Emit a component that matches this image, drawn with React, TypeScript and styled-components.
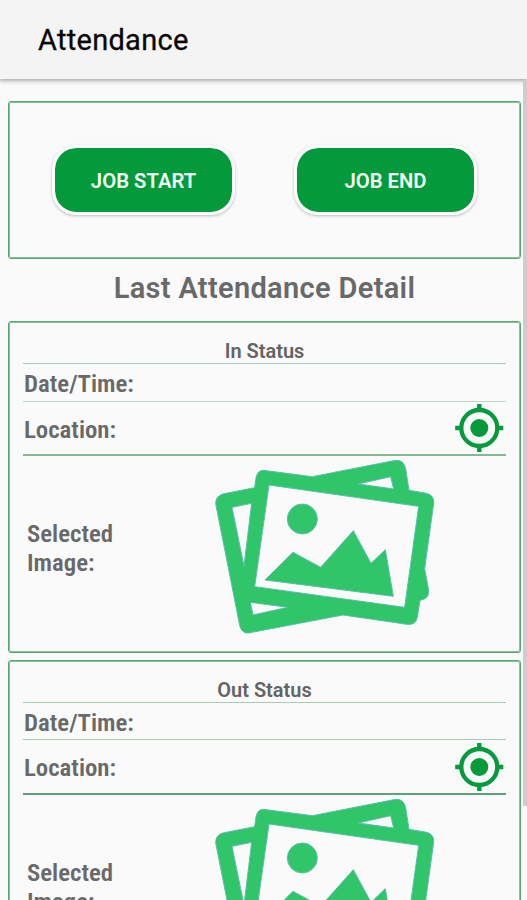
import React from 'react';
import styled, { createGlobalStyle } from 'styled-components';

const GlobalStyle = createGlobalStyle`
  * { box-sizing: border-box; }
  body { margin: 0; background: #fafafa; overflow: hidden; }
`;

const Screen = styled.div`
  position: relative;
  width: 527px;
  height: 900px;
  overflow: hidden;
  display: flex;
  flex-direction: column;
  background: #fafafa;
  font-family: Roboto, "Liberation Sans", sans-serif;
  color: #696969;
`;

const AppBar = styled.header`
  flex: none;
  height: 79px;
  display: flex;
  align-items: center;
  padding-left: 38px;
  background: #f4f4f4;
  box-shadow: 0 1px 4px 1px rgba(0, 0, 0, 0.32);
`;

const Title = styled.h1`
  margin: 0;
  font-size: 29px;
  line-height: 34px;
  font-weight: 400;
  letter-spacing: 0.28px;
  color: #080808;
  -webkit-text-stroke: 0.3px #080808;
`;

const Content = styled.main`
  flex: none;
  display: flex;
  flex-direction: column;
  padding: 22px 6px 0 8px;
`;

const Card = styled.section`
  flex: none;
  border: 1px solid #55a871;
  border-radius: 3px;
  box-shadow: inset 0 0 0 1px #86c39a;
`;

const Actions = styled(Card)`
  height: 158px;
  display: flex;
  justify-content: space-between;
  padding: 43px 43px 0 43px;
`;

const ActionButton = styled.button`
  width: 183px;
  height: 70px;
  padding: 2px 0 0;
  border: 3px solid #ffffff;
  border-radius: 24px;
  background: #029a3a;
  background-clip: padding-box;
  box-shadow: 0 1px 3px rgba(0, 0, 0, 0.25);
  color: #f2fff4;
  font-family: inherit;
  font-size: 20.3px;
  font-weight: 600;
`;

const Heading = styled.h2`
  margin: 0;
  height: 62px;
  line-height: 58px;
  font-size: 29px;
  font-weight: 600;
  letter-spacing: 0.33px;
  text-align: center;
`;

const StatusCard = styled(Card)`
  height: 332px;
  margin-bottom: 7px;
  padding: 0 14px;
`;

const StatusTitle = styled.h3`
  margin: 0;
  height: 41px;
  padding-top: 17px;
  line-height: 24px;
  font-size: 20px;
  font-weight: 600;
  text-align: center;
  color: #646464;
`;

const Row = styled.div<{ $h: number; $line: string }>`
  height: ${(p) => p.$h}px;
  border-top: 1px solid ${(p) => p.$line};
  display: flex;
  align-items: center;
  justify-content: space-between;
  padding: 0 2px 0 1px;
`;

const Label = styled.span`
  font-family: "Roboto Condensed", Roboto, sans-serif;
  font-stretch: 75%;
  font-size: 24.8px;
  line-height: 29px;
  font-weight: 600;
`;

const RowLabel = styled(Label)`
  padding-top: 2px;
`;

const ImageRow = styled.div<{ $line: string }>`
  height: 196px;
  border-top: 2px solid ${(p) => p.$line};
  display: flex;
  align-items: flex-start;
  padding-left: 4px;
`;

const ImageLabel = styled(Label)`
  width: 178px;
  padding-top: 63px;
`;

const Picture = styled.svg`
  flex: none;
  width: 240px;
  height: 200px;
  margin-top: -6px;
`;

const TargetSvg = styled.svg`
  flex: none;
  width: 50px;
  height: 50px;
`;

const ScrollThumb = styled.div`
  position: absolute;
  top: 80px;
  right: 0;
  width: 4px;
  height: 726px;
  background: #cdcdd0;
`;

const TargetIcon = () => (
  <TargetSvg viewBox="0 0 50 50" fill="none" stroke="#059b3c">
    <circle cx="25.3" cy="25" r="18" strokeWidth="4.3" />
    <path d="M25.3 .9V7M25.3 43v6.1M1.2 25H7M43 25h6.3" strokeWidth="4.4" />
    <circle cx="25.3" cy="25" r="9" fill="#059b3c" stroke="none" />
  </TargetSvg>
);

const PhotosIcon = () => (
  <Picture viewBox="0 0 720 600">
    <g fill="#2fc568" stroke="#58bfae" strokeWidth="3" strokeLinejoin="round" fillRule="evenodd">
      <path d="M175 61L322 80L572 31Q596 29 602 56L612 121L660 129Q688 133 686 160L659 356L671 421Q673 447 645 451L637 502Q632 526 606 523L414 495L130 549Q109 550 104 526L32 161Q32 139 53 132L149 113L153 83Q158 61 175 61Z M192 105L149 410L599 472L641 169Z M460 102L557 80L566 117Z M81 172L140 160L117 348Z M136 457L248 472L144 495Z" />
      <circle cx="292" cy="207" r="45" />
      <path d="M180 390L264 307L347 352L445 242L498 340L541 299L565 439Z" strokeLinejoin="miter" />
    </g>
  </Picture>
);

type StatusProps = { title: string; dateHeight: number; lines: [string, string, string] };

const Status = ({ title, dateHeight, lines }: StatusProps) => (
  <StatusCard>
    <StatusTitle>{title}</StatusTitle>
    <Row $h={dateHeight} $line={lines[0]}>
      <RowLabel>Date/Time:</RowLabel>
    </Row>
    <Row $h={91 - dateHeight} $line={lines[1]}>
      <RowLabel>Location:</RowLabel>
      <TargetIcon />
    </Row>
    <ImageRow $line={lines[2]}>
      <ImageLabel>
        Selected
        <br />
        Image:
      </ImageLabel>
      <PhotosIcon />
    </ImageRow>
  </StatusCard>
);

export default function App() {
  return (
    <Screen>
      <GlobalStyle />
      <AppBar>
        <Title>Attendance</Title>
      </AppBar>
      <Content>
        <Actions>
          <ActionButton>JOB START</ActionButton>
          <ActionButton>JOB END</ActionButton>
        </Actions>
        <Heading>Last Attendance Detail</Heading>
        <Status title="In Status" dateHeight={38} lines={['#a5ccb4', '#bad8c5', '#85b994']} />
        <Status title="Out Status" dateHeight={37} lines={['#a5ccb0', '#a5ccb0', '#609f80']} />
      </Content>
      <ScrollThumb />
    </Screen>
  );
}
